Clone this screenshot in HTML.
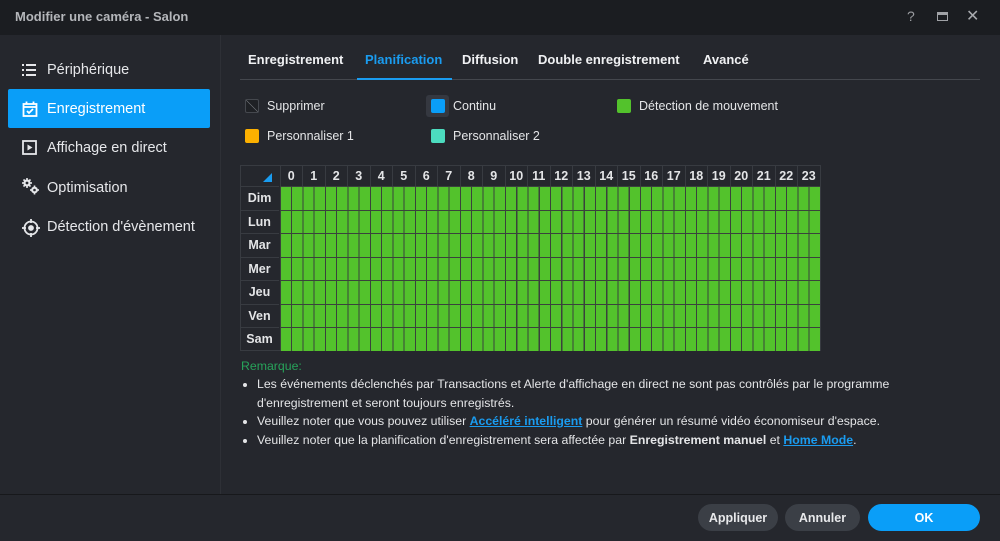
<!DOCTYPE html>
<html><head><meta charset="utf-8"><style>
*{margin:0;padding:0;box-sizing:border-box}
body{width:1000px;height:541px;background:#25272d;font-family:"Liberation Sans","DejaVu Sans",sans-serif;color:#e6e7e9;position:relative;overflow:hidden;font-size:13px}
.abs{position:absolute}
#title{left:0;top:0;width:1000px;height:35px;background:#1b1d21}
#title .t{left:15px;top:9px;font-weight:bold;color:#b4b6ba;font-size:13px}
.side{left:220px;top:35px;width:1px;height:459px;background:#2e3036}
.nav{left:8px;width:202px;height:39px;border-radius:2px;font-size:14.5px;color:#e6e7ea}
.nav span{position:absolute;left:39px;top:12px}
.nav svg{position:absolute;left:14px;top:12px}
.tab{top:52px;font-weight:bold;font-size:13px;color:#f0f1f3}
.leg{width:14px;height:14px;border-radius:2px}
.lt{font-size:12.5px;color:#e4e5e7}
.hd{top:165px;height:21px;width:22.5px;text-align:center;font-weight:bold;font-size:12.5px;padding-top:4px;border-left:1px solid #383b41;color:#e4e5e7}
.dy{left:240px;width:39px;height:23.5px;font-weight:bold;font-size:12.5px;text-align:center;padding-top:4px;border-top:1px solid #383b41;color:#e4e5e7}
.row{left:279.5px;width:540.5px;height:23.5px;background-color:#53c22c;background-image:repeating-linear-gradient(90deg,#3a423c 0 1px,transparent 1px 11.25px),linear-gradient(#3a423c,#3a423c);background-size:100% 100%,100% 1px;background-repeat:no-repeat,no-repeat}
.note{left:257px;font-size:12.3px;color:#e4e5e7;line-height:18.5px}
.dot{left:243px;width:4px;height:4px;border-radius:2px;background:#e4e5e7}
a{color:#1a9cf0;font-weight:bold;text-decoration:underline}
.btn{top:504px;height:27px;border-radius:14px;background:#3b3f46;font-weight:bold;font-size:12.5px;text-align:center;padding-top:7px;color:#e8e9eb}
</style></head><body>
<div id="title" class="abs"><div class="t abs">Modifier une caméra - Salon</div>
<div class="abs" style="left:907px;top:8px;color:#9a9ca0;font-size:14px">?</div>
<div class="abs" style="left:937px;top:12px;width:11px;height:9px;border:1.5px solid #a0a2a6;border-top-width:3px"></div>
<div class="abs" style="left:966px;top:6px;color:#a8aaae;font-size:16px">✕</div>
</div>
<div class="abs side"></div>

<div class="abs nav" style="top:50px"><svg width="14" height="14" viewBox="0 0 14 14" fill="#e6e7ea" style="top:13px"><rect x="0" y="1" width="2" height="2"/><rect x="4" y="1" width="10" height="2"/><rect x="0" y="6" width="2" height="2"/><rect x="4" y="6" width="10" height="2"/><rect x="0" y="11" width="2" height="2"/><rect x="4" y="11" width="10" height="2"/></svg><span>Périphérique</span></div>
<div class="abs nav" style="top:89px;background:#0a9ef8"><svg width="16" height="16" viewBox="0 0 16 16" fill="none" stroke="#fff" stroke-width="1.8"><rect x="1.5" y="3" width="13" height="12"/><line x1="1.5" y1="6" x2="14.5" y2="6"/><line x1="4.5" y1="0.5" x2="4.5" y2="3"/><line x1="11.5" y1="0.5" x2="11.5" y2="3"/><path d="M5 10l2 2 4-4"/></svg><span style="color:#fff">Enregistrement</span></div>
<div class="abs nav" style="top:128px"><svg width="15" height="15" viewBox="0 0 15 15"><rect x="1" y="1" width="13" height="13" fill="none" stroke="#e6e7ea" stroke-width="1.8"/><path d="M5.5 4.5l5 3-5 3z" fill="#e6e7ea"/></svg><span>Affichage en direct</span></div>
<div class="abs nav" style="top:168px"><svg width="18" height="17" viewBox="0 0 18 17" fill="#e6e7ea" style="top:10px"><circle cx="5" cy="5" r="3.6"/><circle cx="12.5" cy="12" r="3.4"/><g stroke="#e6e7ea" stroke-width="1.6"><line x1="5" y1="0" x2="5" y2="10"/><line x1="0" y1="5" x2="10" y2="5"/><line x1="1.5" y1="1.5" x2="8.5" y2="8.5"/><line x1="8.5" y1="1.5" x2="1.5" y2="8.5"/><line x1="12.5" y1="7.5" x2="12.5" y2="16.5"/><line x1="8" y1="12" x2="17" y2="12"/></g><circle cx="5" cy="5" r="1.4" fill="#25272d"/><circle cx="12.5" cy="12" r="1.3" fill="#25272d"/></svg><span>Optimisation</span></div>
<div class="abs nav" style="top:207px"><svg width="18" height="18" viewBox="0 0 18 18" fill="none" stroke="#e6e7ea" stroke-width="1.8"><circle cx="9" cy="9" r="6.5"/><line x1="9" y1="0" x2="9" y2="4"/><line x1="9" y1="14" x2="9" y2="18"/><line x1="0" y1="9" x2="4" y2="9"/><line x1="14" y1="9" x2="18" y2="9"/><circle cx="9" cy="9" r="2" fill="#e6e7ea"/></svg><span>Détection d'évènement</span></div>

<div class="abs tab" style="left:248px">Enregistrement</div>
<div class="abs tab" style="left:365px;color:#1a9cf0">Planification</div>
<div class="abs tab" style="left:462px">Diffusion</div>
<div class="abs tab" style="left:538px">Double enregistrement</div>
<div class="abs tab" style="left:703px">Avancé</div>
<div class="abs" style="left:240px;top:79px;width:740px;height:1px;background:#44474d"></div>
<div class="abs" style="left:357px;top:78px;width:95px;height:2px;background:#1a9cf0"></div>

<div class="abs leg" style="left:245px;top:99px;border:1px solid #45484e;background:linear-gradient(45deg,#1f2125 47%,#7a7d82 50%,#1f2125 53%)"></div><div class="abs lt" style="left:267px;top:99px">Supprimer</div>
<div class="abs" style="left:426px;top:95px;width:23px;height:22px;background:#353840;border-radius:3px"></div>
<div class="abs leg" style="left:431px;top:99px;background:#0a9ef8"></div><div class="abs lt" style="left:453px;top:99px">Continu</div>
<div class="abs leg" style="left:617px;top:99px;background:#53c22c"></div><div class="abs lt" style="left:639px;top:99px">Détection de mouvement</div>
<div class="abs leg" style="left:245px;top:129px;background:#fcb000"></div><div class="abs lt" style="left:267px;top:129px">Personnaliser 1</div>
<div class="abs leg" style="left:431px;top:129px;background:#4cdcbf"></div><div class="abs lt" style="left:453px;top:129px">Personnaliser 2</div>

<div class="abs" style="left:240px;top:165px;width:581px;height:186px;border:1px solid #383b41"></div>
<div class="abs" style="left:263px;top:173px;width:0;height:0;border-left:9px solid transparent;border-bottom:9px solid #1a9cf0"></div>
<div class="abs hd" style="left:279.5px">0</div><div class="abs hd" style="left:302px">1</div><div class="abs hd" style="left:324.5px">2</div><div class="abs hd" style="left:347px">3</div><div class="abs hd" style="left:369.5px">4</div><div class="abs hd" style="left:392px">5</div><div class="abs hd" style="left:414.5px">6</div><div class="abs hd" style="left:437px">7</div><div class="abs hd" style="left:459.5px">8</div><div class="abs hd" style="left:482px">9</div><div class="abs hd" style="left:504.5px">10</div><div class="abs hd" style="left:527px">11</div><div class="abs hd" style="left:549.5px">12</div><div class="abs hd" style="left:572px">13</div><div class="abs hd" style="left:594.5px">14</div><div class="abs hd" style="left:617px">15</div><div class="abs hd" style="left:639.5px">16</div><div class="abs hd" style="left:662px">17</div><div class="abs hd" style="left:684.5px">18</div><div class="abs hd" style="left:707px">19</div><div class="abs hd" style="left:729.5px">20</div><div class="abs hd" style="left:752px">21</div><div class="abs hd" style="left:774.5px">22</div><div class="abs hd" style="left:797px">23</div>

<div class="abs dy" style="top:186px">Dim</div><div class="abs row" style="top:186px"></div>
<div class="abs dy" style="top:209.5px">Lun</div><div class="abs row" style="top:209.5px"></div>
<div class="abs dy" style="top:233px">Mar</div><div class="abs row" style="top:233px"></div>
<div class="abs dy" style="top:256.5px">Mer</div><div class="abs row" style="top:256.5px"></div>
<div class="abs dy" style="top:280px">Jeu</div><div class="abs row" style="top:280px"></div>
<div class="abs dy" style="top:303.5px">Ven</div><div class="abs row" style="top:303.5px"></div>
<div class="abs dy" style="top:327px">Sam</div><div class="abs row" style="top:327px"></div>

<div class="abs" style="left:241px;top:359px;color:#27a35a;font-size:12.3px">Remarque:</div>
<div class="abs dot" style="top:383px"></div><div class="abs dot" style="top:420px"></div><div class="abs dot" style="top:439px"></div>
<div class="abs note" style="top:375px;width:700px">Les événements déclenchés par Transactions et Alerte d'affichage en direct ne sont pas contrôlés par le programme d'enregistrement et seront toujours enregistrés.</div>
<div class="abs note" style="top:412px;white-space:nowrap">Veuillez noter que vous pouvez utiliser <a>Accéléré intelligent</a> pour générer un résumé vidéo économiseur d'espace.</div>
<div class="abs note" style="top:431px;white-space:nowrap">Veuillez noter que la planification d'enregistrement sera affectée par <b>Enregistrement manuel</b> et <a>Home Mode</a>.</div>

<div class="abs" style="left:0;top:494px;width:1000px;height:1px;background:#17181b"></div>
<div class="abs btn" style="left:698px;width:80px">Appliquer</div>
<div class="abs btn" style="left:785px;width:75px">Annuler</div>
<div class="abs btn" style="left:868px;width:112px;background:#0a9ef8;color:#fff">OK</div>
</body></html>
